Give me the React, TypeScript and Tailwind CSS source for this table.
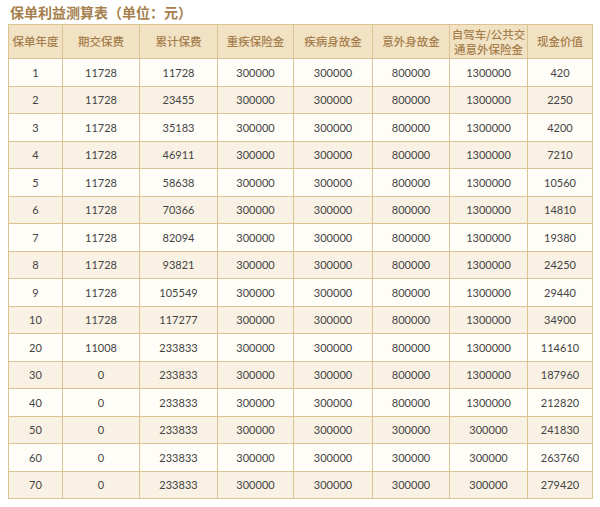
const HEADERS: string[][] = [
  ["保单年度"],
  ["期交保费"],
  ["累计保费"],
  ["重疾保险金"],
  ["疾病身故金"],
  ["意外身故金"],
  ["自驾车/公共交", "通意外保险金"],
  ["现金价值"],
];

const WIDTHS = [54, 77, 78, 76, 79, 77, 78, 65];

const ROWS: string[][] = [
  ["1", "11728", "11728", "300000", "300000", "800000", "1300000", "420"],
  ["2", "11728", "23455", "300000", "300000", "800000", "1300000", "2250"],
  ["3", "11728", "35183", "300000", "300000", "800000", "1300000", "4200"],
  ["4", "11728", "46911", "300000", "300000", "800000", "1300000", "7210"],
  ["5", "11728", "58638", "300000", "300000", "800000", "1300000", "10560"],
  ["6", "11728", "70366", "300000", "300000", "800000", "1300000", "14810"],
  ["7", "11728", "82094", "300000", "300000", "800000", "1300000", "19380"],
  ["8", "11728", "93821", "300000", "300000", "800000", "1300000", "24250"],
  ["9", "11728", "105549", "300000", "300000", "800000", "1300000", "29440"],
  ["10", "11728", "117277", "300000", "300000", "800000", "1300000", "34900"],
  ["20", "11008", "233833", "300000", "300000", "800000", "1300000", "114610"],
  ["30", "0", "233833", "300000", "300000", "800000", "1300000", "187960"],
  ["40", "0", "233833", "300000", "300000", "800000", "1300000", "212820"],
  ["50", "0", "233833", "300000", "300000", "300000", "300000", "241830"],
  ["60", "0", "233833", "300000", "300000", "300000", "300000", "263760"],
  ["70", "0", "233833", "300000", "300000", "300000", "300000", "279420"],
];

export default function App() {
  return (
    <div className="h-[507px] w-[600px] bg-white pl-[8px] pt-[2px] font-['Noto_Sans_CJK_SC',sans-serif]">
      <h1 className="h-[22px] pl-[2px] text-[14px] font-semibold leading-[20px] text-[#a5804c]">
        保单利益测算表（单位：元）
      </h1>
      <table className="w-[584px] table-fixed border-collapse border border-[#dcc394] text-center">
        <colgroup>
          {WIDTHS.map((w, i) => (
            <col key={i} style={{ width: w }} />
          ))}
        </colgroup>
        <thead>
          <tr className="h-[34px] bg-[#f2e2c4]">
            {HEADERS.map((h) => (
              <th
                key={h[0]}
                className="whitespace-nowrap border border-[#dcc394] p-0 text-[11.5px] font-medium leading-[15px] text-[#a57e4c]"
              >
                {h.map((line) => (
                  <div key={line}>{line}</div>
                ))}
              </th>
            ))}
          </tr>
        </thead>
        <tbody>
          {ROWS.map((r, i) => (
            <tr
              key={r[0]}
              className={`h-[27.5px] ${i % 2 === 0 ? "bg-[#fffdf7]" : "bg-[#f8f1e4]"}`}
            >
              {r.map((c, j) => (
                <td
                  key={j}
                  className="border border-[#dcc394] p-0 font-['Lato',sans-serif] text-[11px] leading-none text-[#444444]"
                >
                  {c}
                </td>
              ))}
            </tr>
          ))}
        </tbody>
      </table>
    </div>
  );
}
